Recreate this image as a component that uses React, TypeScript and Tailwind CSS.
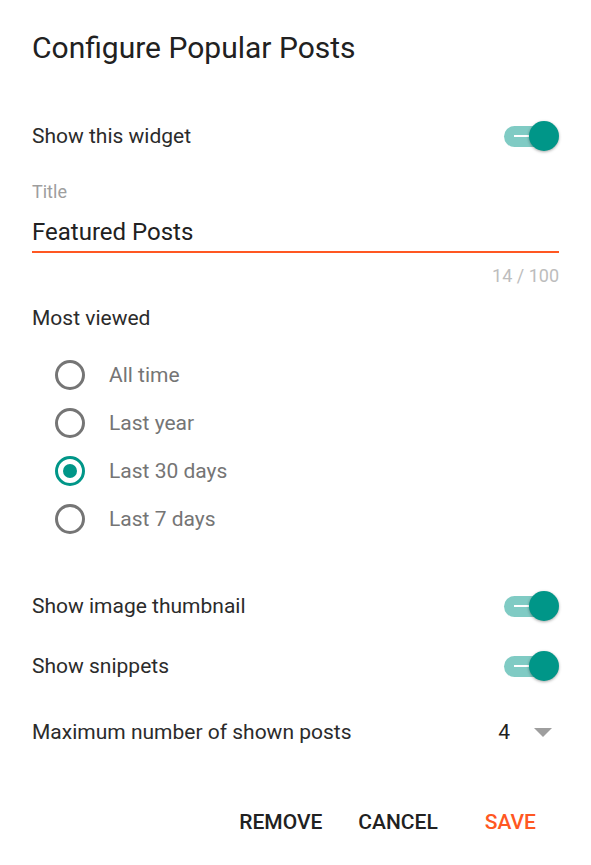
import React from 'react'

function Toggle() {
  return (
    <div className="relative w-[56px] h-[32px] flex items-center">
      <div className="ml-[1px] w-[50px] h-[21px] rounded-full bg-[#80cbc4] flex items-center">
        <span className="ml-[10px] w-[15px] h-[2px] bg-white" />
      </div>
      <span className="absolute right-0 top-[1px] w-[30px] h-[30px] rounded-full bg-[#009688] shadow-[0_1px_3px_rgba(0,0,0,0.35)]" />
    </div>
  )
}

function Radio({ label, checked }: { label: string; checked?: boolean }) {
  return (
    <div className="h-[48px] flex items-center pl-[23px]">
      <span
        className={
          checked
            ? 'w-[30px] h-[30px] rounded-full border-[3px] border-[#009688] flex items-center justify-center'
            : 'w-[30px] h-[30px] rounded-full border-[3px] border-[#757575]'
        }
      >
        {checked && <span className="w-[14px] h-[14px] rounded-full bg-[#009688]" />}
      </span>
      <span className="ml-[24px] text-[21px] text-[#757575]">{label}</span>
    </div>
  )
}

function ToggleRow({ label, className }: { label: string; className?: string }) {
  return (
    <div className={`h-[48px] flex items-center justify-between ${className ?? ''}`}>
      <span className="text-[21px] text-[#2b2b2b]">{label}</span>
      <Toggle />
    </div>
  )
}

export default function App() {
  return (
    <div
      className="w-[591px] h-[865px] bg-white px-[32px] leading-none"
      style={{ fontFamily: 'Roboto, "Noto Sans", sans-serif' }}
    >
      {/* Header */}
      <div className="h-[96px] flex items-center">
        <h1 className="text-[30px] text-[#212121]">Configure Popular Posts</h1>
      </div>

      <ToggleRow label="Show this widget" className="mt-[16px]" />

      {/* Title field */}
      <div className="mt-[20px] h-[24px] flex items-center text-[18px] text-[#9e9e9e]">Title</div>
      <div className="mt-[12px] h-[32px] flex items-center text-[24px] text-[#212121]">Featured Posts</div>
      <div className="mt-[3px] h-[2px] bg-[#ff5722]" />
      <div className="mt-[11px] h-[24px] flex items-center justify-end text-[18px] text-[#bdbdbd]">
        14 / 100
      </div>

      {/* Most viewed */}
      <div className="mt-[18px] h-[24px] flex items-center text-[21px] text-[#2b2b2b]">Most viewed</div>
      <div className="mt-[21px]">
        <Radio label="All time" />
        <Radio label="Last year" />
        <Radio label="Last 30 days" checked />
        <Radio label="Last 7 days" />
      </div>

      <ToggleRow label="Show image thumbnail" className="mt-[39px]" />
      <ToggleRow label="Show snippets" className="mt-[12px]" />

      <div className="mt-[18px] h-[48px] flex items-center justify-between">
        <span className="text-[21px] text-[#2b2b2b]">Maximum number of shown posts</span>
        <div className="flex items-center">
          <span className="text-[21px] text-[#212121]">4</span>
          <svg width="18" height="9" viewBox="0 0 18 9" className="ml-[24px] mr-[7px]">
            <path d="M0 0 L18 0 L9 9 Z" fill="#9e9e9e" />
          </svg>
        </div>
      </div>

      {/* Actions */}
      <div className="mt-[42px] h-[48px] flex items-center justify-end pr-[23px] text-[21px] font-medium">
        <button className="uppercase text-[#212121]">Remove</button>
        <button className="ml-[36px] uppercase text-[#212121]">Cancel</button>
        <button className="ml-[47px] uppercase text-[#ff5722]">Save</button>
      </div>
    </div>
  )
}
